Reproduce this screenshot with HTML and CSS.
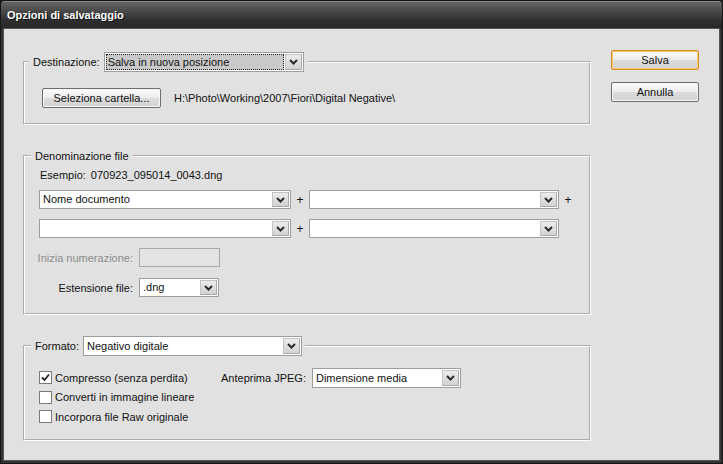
FILE: index.html
```html
<!DOCTYPE html>
<html lang="it">
<head>
<meta charset="utf-8">
<title>Opzioni di salvataggio</title>
<link rel="stylesheet" href="styles.css">
</head>
<body>
<div class="window">
  <div class="titlebar">Opzioni di salvataggio</div>
  <div class="frame">
    <div class="client">
      <div class="groups">
        <fieldset class="group g-dest">
          <legend class="legend">
            <span class="legend-label">Destinazione:</span>
            <div class="select w-dest">
              <span class="val focus">Salva in nuova posizione</span>
              <span class="arr"><svg width="9" height="6" viewBox="0 0 9 6"><path d="M1 1 L4.5 4.5 L8 1" fill="none" stroke="#2a2a2a" stroke-width="2"/></svg></span>
            </div>
          </legend>
          <div class="dest-row">
            <button class="btn btn-folder">Seleziona cartella...</button>
            <span class="path">H:\Photo\Working\2007\Fiori\Digital Negative\</span>
          </div>
        </fieldset>

        <fieldset class="group g-name">
          <legend class="legend legend-text">Denominazione file</legend>
          <div class="example"><span>Esempio:</span><span class="example-val">070923_095014_0043.dng</span></div>
          <div class="name-grid">
            <div class="select sel-h19">
              <span class="val">Nome documento</span>
              <span class="arr"><svg width="9" height="6" viewBox="0 0 9 6"><path d="M1 1 L4.5 4.5 L8 1" fill="none" stroke="#2a2a2a" stroke-width="2"/></svg></span>
            </div>
            <span class="plus">+</span>
            <div class="select sel-h19">
              <span class="val"></span>
              <span class="arr"><svg width="9" height="6" viewBox="0 0 9 6"><path d="M1 1 L4.5 4.5 L8 1" fill="none" stroke="#2a2a2a" stroke-width="2"/></svg></span>
            </div>
            <span class="plus">+</span>
            <div class="select sel-h19">
              <span class="val"></span>
              <span class="arr"><svg width="9" height="6" viewBox="0 0 9 6"><path d="M1 1 L4.5 4.5 L8 1" fill="none" stroke="#2a2a2a" stroke-width="2"/></svg></span>
            </div>
            <span class="plus">+</span>
            <div class="select sel-h19">
              <span class="val"></span>
              <span class="arr"><svg width="9" height="6" viewBox="0 0 9 6"><path d="M1 1 L4.5 4.5 L8 1" fill="none" stroke="#2a2a2a" stroke-width="2"/></svg></span>
            </div>
            <span></span>
          </div>
          <div class="num-grid">
            <span class="num-label disabled">Inizia numerazione:</span>
            <div class="input-dis"></div>
            <span class="num-label">Estensione file:</span>
            <div class="select sel-h19">
              <span class="val">.dng</span>
              <span class="arr"><svg width="9" height="6" viewBox="0 0 9 6"><path d="M1 1 L4.5 4.5 L8 1" fill="none" stroke="#2a2a2a" stroke-width="2"/></svg></span>
            </div>
          </div>
        </fieldset>

        <fieldset class="group g-fmt">
          <legend class="legend">
            <span class="legend-label">Formato:</span>
            <div class="select w-fmt">
              <span class="val">Negativo digitale</span>
              <span class="arr"><svg width="9" height="6" viewBox="0 0 9 6"><path d="M1 1 L4.5 4.5 L8 1" fill="none" stroke="#2a2a2a" stroke-width="2"/></svg></span>
            </div>
          </legend>
          <div class="fmt-body">
            <div class="checks">
              <div class="check-row">
                <span class="cbox"><svg width="11" height="11" viewBox="0 0 11 11"><path d="M2 5.5 L4.5 8 L9 2.5" fill="none" stroke="#222" stroke-width="1.8"/></svg></span>
                <span>Compresso (senza perdita)</span>
              </div>
              <div class="check-row">
                <span class="cbox"></span>
                <span>Converti in immagine lineare</span>
              </div>
              <div class="check-row">
                <span class="cbox"></span>
                <span>Incorpora file Raw originale</span>
              </div>
            </div>
            <div class="jpeg">
              <span class="jpeg-label">Anteprima JPEG:</span>
              <div class="select w-jpeg">
                <span class="val">Dimensione media</span>
                <span class="arr"><svg width="9" height="6" viewBox="0 0 9 6"><path d="M1 1 L4.5 4.5 L8 1" fill="none" stroke="#2a2a2a" stroke-width="2"/></svg></span>
              </div>
            </div>
          </div>
        </fieldset>
      </div>

      <div class="actions">
        <button class="btn btn-act btn-default">Salva</button>
        <button class="btn btn-act">Annulla</button>
      </div>
    </div>
  </div>
</div>
</body>
</html>
```

FILE: styles.css
```css
* { box-sizing: border-box; }
html, body { margin: 0; padding: 0; }
body {
  width: 723px;
  height: 464px;
  overflow: hidden;
  background: #1e1e1e;
  font-family: "Liberation Sans", Arial, sans-serif;
  font-size: 11px;
  color: #111;
}
.window {
  width: 723px;
  height: 464px;
  display: flex;
  flex-direction: column;
  border: 1px solid #151515;
  border-radius: 5px 5px 0 0;
  background: #2f2f2f;
  overflow: hidden;
}
.titlebar {
  height: 28px;
  flex: none;
  padding-left: 6px;
  line-height: 28px;
  color: #fff;
  font-weight: bold;
  font-size: 11px;
  background: linear-gradient(#686868 0%, #4a4a4a 35%, #2e2e2e 70%, #262626 100%);
  box-shadow: inset 0 1px 0 #8a8a8a;
  text-shadow: 1px 1px 0 #111;
}
.frame {
  flex: 1;
  display: flex;
  padding: 0 3px 3px;
  background: #333;
}
.client {
  flex: 1;
  display: flex;
  align-items: flex-start;
  background: #e1e1e1;
  padding: 23px 0 0 19px;
  box-shadow: 0 0 0 1px #555;
}
.groups {
  width: 568px;
  display: flex;
  flex-direction: column;
}
.group {
  margin: 0;
  padding: 0;
  min-width: 0;
  border: 2px groove #ffffff;
}
.legend {
  margin-left: 4px;
  padding: 0 3px 0 4px;
  display: flex;
  align-items: center;
  height: 20px;
  white-space: nowrap;
}
.legend-text {
  height: 14px;
  line-height: 14px;
  padding-right: 4px;
}
.legend-label { margin-right: 4px; }

/* select */
.select {
  display: flex;
  height: 20px;
  border: 1px solid #9d9d9d;
  background: #fff;
}
.sel-h19 { height: 19px; }
.select .val {
  flex: 1;
  margin: 1px 0 1px 1px;
  padding: 0 2px;
  line-height: 16px;
  white-space: nowrap;
  overflow: hidden;
}
.sel-h19 .val { line-height: 15px; }
.select .val.focus {
  background: #c9c9c9;
  outline: 1px dotted #222;
  outline-offset: -1px;
}
.select .arr {
  width: 17px;
  margin: 1px;
  display: flex;
  align-items: center;
  justify-content: center;
  background: linear-gradient(#ececec, #d2d2d2);
  border: 1px solid #c4c4c4;
  border-right-color: #a9a9a9;
  border-bottom-color: #a9a9a9;
}
.w-dest { width: 200px; }
.w-fmt { width: 219px; }
.w-jpeg { width: 149px; }

/* buttons */
.btn {
  height: 20px;
  padding: 0;
  font-family: inherit;
  font-size: 11px;
  color: #111;
  border: 1px solid #6f6f6f;
  border-radius: 2px;
  background: linear-gradient(#fdfdfd 0%, #ececec 50%, #dcdcdc 51%, #d3d3d3 100%);
  box-shadow: inset 0 0 0 1px #f7f7f7;
}
.btn-folder { width: 119px; }
.btn-act { width: 88px; }
.btn-default {
  border-color: #d48e2c;
  box-shadow: inset 0 0 0 1px #f6c66a;
}

/* group 1 */
.dest-row {
  display: flex;
  align-items: center;
  padding: 16px 17px 15px 17px;
}
.path { margin-left: 13px; }

/* group 2 */
.g-name { margin-top: 24px; padding: 6px 14px 16px 14px; }
.g-name .legend { margin-left: -8px; }
.example { height: 13px; line-height: 13px; margin: 0 0 8px 1px; display: flex; }
.example-val { margin-left: 5px; }
.name-grid {
  display: grid;
  grid-template-columns: 252px 18px 250px 18px;
  row-gap: 10px;
  align-items: center;
}
.plus { text-align: center; font-size: 12px; }
.num-grid {
  display: grid;
  grid-template-columns: 94px 80px;
  column-gap: 6px;
  row-gap: 11px;
  align-items: center;
  margin: 10px 0 0 0;
}
.num-label { justify-self: end; white-space: nowrap; }
.disabled { color: #8c8c8c; }
.input-dis {
  width: 81px;
  height: 19px;
  border: 1px solid #a9a9a9;
  background: #e3e3e3;
}

/* group 3 */
.g-fmt { margin-top: 21px; padding: 12px 14px 12px 14px; }
.g-fmt .legend { margin-left: -8px; }
.fmt-body { display: flex; align-items: flex-start; }
.checks { width: 182px; display: flex; flex-direction: column; }
.check-row {
  height: 19.5px;
  display: flex;
  align-items: center;
  white-space: nowrap;
}
.cbox {
  width: 13px;
  height: 13px;
  margin-right: 3px;
  border: 1px solid #7b7b7b;
  background: #fff;
  display: flex;
  align-items: center;
  justify-content: center;
}
.jpeg { display: flex; align-items: center; white-space: nowrap; }
.jpeg .select { margin-left: 6px; }

/* actions */
.actions {
  margin: -2px 0 0 20px;
  display: flex;
  flex-direction: column;
  gap: 12px;
}
```
